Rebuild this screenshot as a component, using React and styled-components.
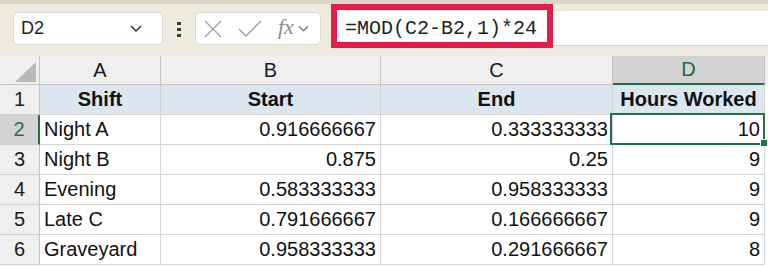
import React from 'react';
import styled, { createGlobalStyle, css } from 'styled-components';

const GlobalStyle = createGlobalStyle`
  * { box-sizing: border-box; }
  html, body { margin: 0; padding: 0; overflow: hidden; }
  body {
    width: 768px;
    height: 266px;
    background: #ffffff;
    font-family: "Liberation Sans", Arial, sans-serif;
  }
`;

const GREEN = '#217346';

const Page = styled.div`
  display: flex;
  flex-direction: column;
  width: 768px;
  height: 266px;
`;

// formula bar strip
const Toolbar = styled.div`
  display: flex;
  align-items: flex-start;
  height: 56px;
  padding: 8px 0 0 13px;
  background: #eeebde;
  border-top: 4px solid #d8d6cb;
`;

const NameBox = styled.div`
  display: flex;
  align-items: center;
  justify-content: space-between;
  width: 150px;
  height: 33px;
  padding: 0 20px 0 7px;
  background: #fff;
  border: 1px solid #d9d8d2;
  border-radius: 5px;
  font-size: 18px;
  color: #1f1f1f;
`;

const Dots = styled.div`
  display: flex;
  flex-direction: column;
  gap: 3px;
  width: 32px;
  align-items: center;
  padding-top: 10px;

  span {
    width: 4px;
    height: 3px;
    background: #3c3c3c;
  }
`;

const FxBox = styled.div`
  display: flex;
  align-items: center;
  width: 126px;
  height: 33px;
  padding-left: 8px;
  gap: 0;
  background: #fff;
  border: 1px solid #d9d8d2;
  border-radius: 5px;
`;

const FxLabel = styled.span`
  font-family: "Liberation Serif", "Times New Roman", serif;
  font-style: italic;
  font-size: 22px;
  color: #8c8c8c;
  margin: -3px 4px 0 16px;
`;

const FormulaField = styled.div`
  position: relative;
  flex: 1;
  margin-left: 10px;
  margin-top: -1px;
  height: 35px;
  padding-left: 14px;
  display: flex;
  align-items: center;
  background: #fff;
  border-bottom: 1px solid #d2d2d2;
  font-family: "Liberation Mono", "Courier New", monospace;
  font-size: 20px;
  color: #222;
`;

const Highlight = styled.div`
  position: absolute;
  left: 0;
  top: -7px;
  width: 222px;
  height: 44px;
  border: 6px solid #e31c4b;
  pointer-events: none;
`;

// sheet grid
const Sheet = styled.div`
  display: grid;
  grid-template-columns: 40px 121px 220px 232px 152px 1fr;
  grid-template-rows: 29px repeat(6, 30px) 1fr;
  flex: 1;
`;

const Cell = styled.div`
  position: relative;
  display: flex;
  align-items: center;
  padding: 0 4px;
  font-size: 20px;
  color: #111;
  background: #fff;
  border-right: 1px solid #d5d5d5;
  border-bottom: 1px solid #d5d5d5;
  white-space: nowrap;
  justify-content: ${p => (p.$align === 'right' ? 'flex-end' : p.$align === 'center' ? 'center' : 'flex-start')};

  ${p => p.$head && css`
    background: #dce6f1;
    font-weight: bold;
  `}

  ${p => p.$selected && css`
    &::after {
      content: '';
      position: absolute;
      left: -3px;
      top: -2px;
      right: -1px;
      bottom: -1px;
      border: 2px solid ${GREEN};
    }
    &::before {
      content: '';
      position: absolute;
      right: -4px;
      bottom: -3px;
      width: 6px;
      height: 6px;
      background: ${GREEN};
      border: 1px solid #fff;
      z-index: 2;
    }
  `}
`;

const ColHead = styled.div`
  display: flex;
  align-items: center;
  justify-content: center;
  font-size: 20px;
  color: ${p => (p.$active ? '#1b6a40' : '#1a1a1a')};
  background: ${p => (p.$active ? '#d3d3d3' : '#efefef')};
  border-right: 1px solid #c4c4c4;
  border-bottom: ${p => (p.$active ? `2px solid ${GREEN}` : '1px solid #c4c4c4')};
`;

const RowHead = styled.div`
  display: flex;
  align-items: center;
  justify-content: center;
  font-size: 20px;
  color: ${p => (p.$active ? '#2a6a5a' : '#1a1a1a')};
  background: ${p => (p.$active ? '#d3d3d3' : '#efefef')};
  border-right: ${p => (p.$active ? `2px solid ${GREEN}` : '1px solid #c4c4c4')};
  border-bottom: 1px solid #d0d0d0;
`;

const Corner = styled.div`
  display: flex;
  align-items: flex-end;
  justify-content: flex-end;
  padding: 0 3px 2px 0;
  background: #efefef;
  border-right: 1px solid #c4c4c4;
  border-bottom: 1px solid #c4c4c4;

  span {
    width: 0;
    height: 0;
    border-left: 21px solid transparent;
    border-bottom: 20px solid #b9b9b9;
  }
`;

const Filler = styled.div`
  background: ${p => (p.$head ? '#efefef' : '#fff')};
`;

const Chevron = ({ color = '#333', w = 12 }) => (
  <svg width={w} height="7" viewBox="0 0 12 7" fill="none">
    <path d="M1 1 L6 6 L11 1" stroke={color} strokeWidth="1.5" />
  </svg>
);

const rows = [
  ['Night A', '0.916666667', '0.333333333', '10'],
  ['Night B', '0.875', '0.25', '9'],
  ['Evening', '0.583333333', '0.958333333', '9'],
  ['Late C', '0.791666667', '0.166666667', '9'],
  ['Graveyard', '0.958333333', '0.291666667', '8'],
];

export default function App() {
  return (
    <Page>
      <GlobalStyle />
      <Toolbar>
        <NameBox>
          D2
          <Chevron />
        </NameBox>
        <Dots><span /><span /><span /></Dots>
        <FxBox>
          <svg width="18" height="18" viewBox="0 0 18 18" fill="none">
            <path d="M1 1 L17 17 M17 1 L1 17" stroke="#a3a3a3" strokeWidth="1.4" />
          </svg>
          <svg width="24" height="18" viewBox="0 0 24 18" fill="none" style={{ marginLeft: 16 }}>
            <path d="M1 9 L8 16 L23 1" stroke="#a3a3a3" strokeWidth="1.4" />
          </svg>
          <FxLabel>fx</FxLabel>
          <Chevron color="#7a7a7a" w={11} />
        </FxBox>
        <FormulaField>
          =MOD(C2-B2,1)*24
          <Highlight />
        </FormulaField>
      </Toolbar>

      <Sheet>
        <Corner><span /></Corner>
        <ColHead>A</ColHead>
        <ColHead>B</ColHead>
        <ColHead>C</ColHead>
        <ColHead $active>D</ColHead>
        <Filler $head />

        <RowHead>1</RowHead>
        <Cell $head $align="center">Shift</Cell>
        <Cell $head $align="center">Start</Cell>
        <Cell $head $align="center">End</Cell>
        <Cell $head $align="center">Hours Worked</Cell>
        <Filler />

        {rows.map((r, i) => (
          <React.Fragment key={r[0]}>
            <RowHead $active={i === 0}>{i + 2}</RowHead>
            <Cell>{r[0]}</Cell>
            <Cell $align="right">{r[1]}</Cell>
            <Cell $align="right">{r[2]}</Cell>
            <Cell $align="right" $selected={i === 0}>{r[3]}</Cell>
            <Filler />
          </React.Fragment>
        ))}
      </Sheet>
    </Page>
  );
}
